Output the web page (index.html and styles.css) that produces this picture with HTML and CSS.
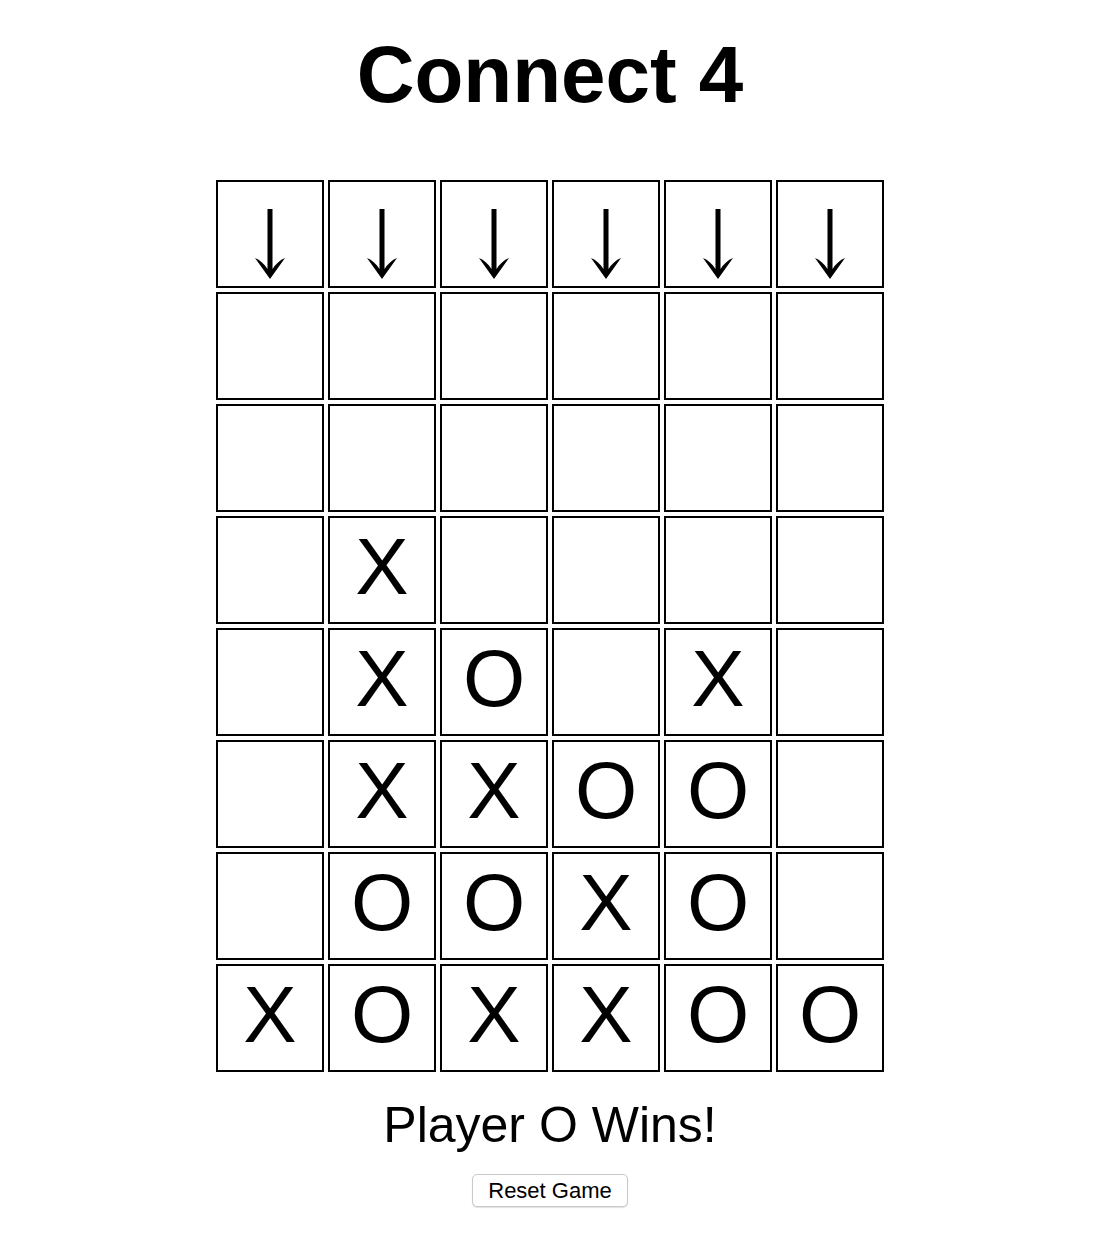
FILE: index.html
```html
<!DOCTYPE html>
<html>
<head>
<meta charset="utf-8">
<title>Connect 4</title>
<link rel="stylesheet" href="styles.css">
</head>
<body>
<div class="page">
  <h1 class="title">Connect 4</h1>
  <div class="board">
    <div class="cell drop"><svg class="arrow" viewBox="0 0 30 70"><path d="M12.5 0H17.5V60C20.5 55 25 51 30 49L15 70L0 49C5 51 9.5 55 12.5 60Z"/></svg></div>
    <div class="cell drop"><svg class="arrow" viewBox="0 0 30 70"><path d="M12.5 0H17.5V60C20.5 55 25 51 30 49L15 70L0 49C5 51 9.5 55 12.5 60Z"/></svg></div>
    <div class="cell drop"><svg class="arrow" viewBox="0 0 30 70"><path d="M12.5 0H17.5V60C20.5 55 25 51 30 49L15 70L0 49C5 51 9.5 55 12.5 60Z"/></svg></div>
    <div class="cell drop"><svg class="arrow" viewBox="0 0 30 70"><path d="M12.5 0H17.5V60C20.5 55 25 51 30 49L15 70L0 49C5 51 9.5 55 12.5 60Z"/></svg></div>
    <div class="cell drop"><svg class="arrow" viewBox="0 0 30 70"><path d="M12.5 0H17.5V60C20.5 55 25 51 30 49L15 70L0 49C5 51 9.5 55 12.5 60Z"/></svg></div>
    <div class="cell drop"><svg class="arrow" viewBox="0 0 30 70"><path d="M12.5 0H17.5V60C20.5 55 25 51 30 49L15 70L0 49C5 51 9.5 55 12.5 60Z"/></svg></div>

    <div class="cell"></div><div class="cell"></div><div class="cell"></div><div class="cell"></div><div class="cell"></div><div class="cell"></div>
    <div class="cell"></div><div class="cell"></div><div class="cell"></div><div class="cell"></div><div class="cell"></div><div class="cell"></div>
    <div class="cell"></div><div class="cell">X</div><div class="cell"></div><div class="cell"></div><div class="cell"></div><div class="cell"></div>
    <div class="cell"></div><div class="cell">X</div><div class="cell">O</div><div class="cell"></div><div class="cell">X</div><div class="cell"></div>
    <div class="cell"></div><div class="cell">X</div><div class="cell">X</div><div class="cell">O</div><div class="cell">O</div><div class="cell"></div>
    <div class="cell"></div><div class="cell">O</div><div class="cell">O</div><div class="cell">X</div><div class="cell">O</div><div class="cell"></div>
    <div class="cell">X</div><div class="cell">O</div><div class="cell">X</div><div class="cell">X</div><div class="cell">O</div><div class="cell">O</div>
  </div>
  <div class="status">Player O Wins!</div>
  <button class="reset">Reset Game</button>
</div>
<div class="bottom-fade"></div>
</body>
</html>
```
FILE: styles.css
```css
html, body {
  margin: 0;
  padding: 0;
  background: #ffffff;
}

body {
  font-family: "Liberation Sans", Arial, sans-serif;
  color: #000000;
  width: 1114px;
  height: 1234px;
  overflow: hidden;
  position: relative;
}

.page {
  width: 1100px;
  display: flex;
  flex-direction: column;
  align-items: center;
  padding-top: 35px;
}

.title {
  margin: 0;
  font-size: 80px;
  line-height: 80px;
  font-weight: bold;
  height: 80px;
}

.board {
  margin-top: 63px;
  display: grid;
  grid-template-columns: repeat(6, 108px);
  grid-auto-rows: 108px;
  gap: 4px;
  padding: 2px;
}

.cell {
  box-sizing: border-box;
  border: 2px solid #000000;
  display: flex;
  align-items: center;
  justify-content: center;
  font-size: 80px;
  line-height: 80px;
  padding-bottom: 6px;
}

.cell.drop {
  padding-bottom: 0;
  padding-top: 20px;
}

.arrow {
  width: 30px;
  height: 70px;
  display: block;
  fill: #000000;
}

.status {
  margin-top: 26px;
  font-size: 50px;
  line-height: 50px;
  height: 50px;
}

.reset {
  margin-top: 24px;
  height: 33px;
  box-sizing: border-box;
  padding: 0 15px;
  font-family: "Liberation Sans", Arial, sans-serif;
  font-size: 22px;
  line-height: 22px;
  color: #000000;
  background: #ffffff;
  border: 1px solid #c9c9c9;
  border-radius: 5px;
  box-shadow: 0 1px 1px rgba(0, 0, 0, 0.12);
}

.bottom-fade {
  position: absolute;
  left: 0;
  right: 0;
  bottom: 0;
  height: 18px;
  background: linear-gradient(to bottom, rgba(250, 250, 250, 0), #f9f9f9 60%);
  z-index: -1;
}
```
